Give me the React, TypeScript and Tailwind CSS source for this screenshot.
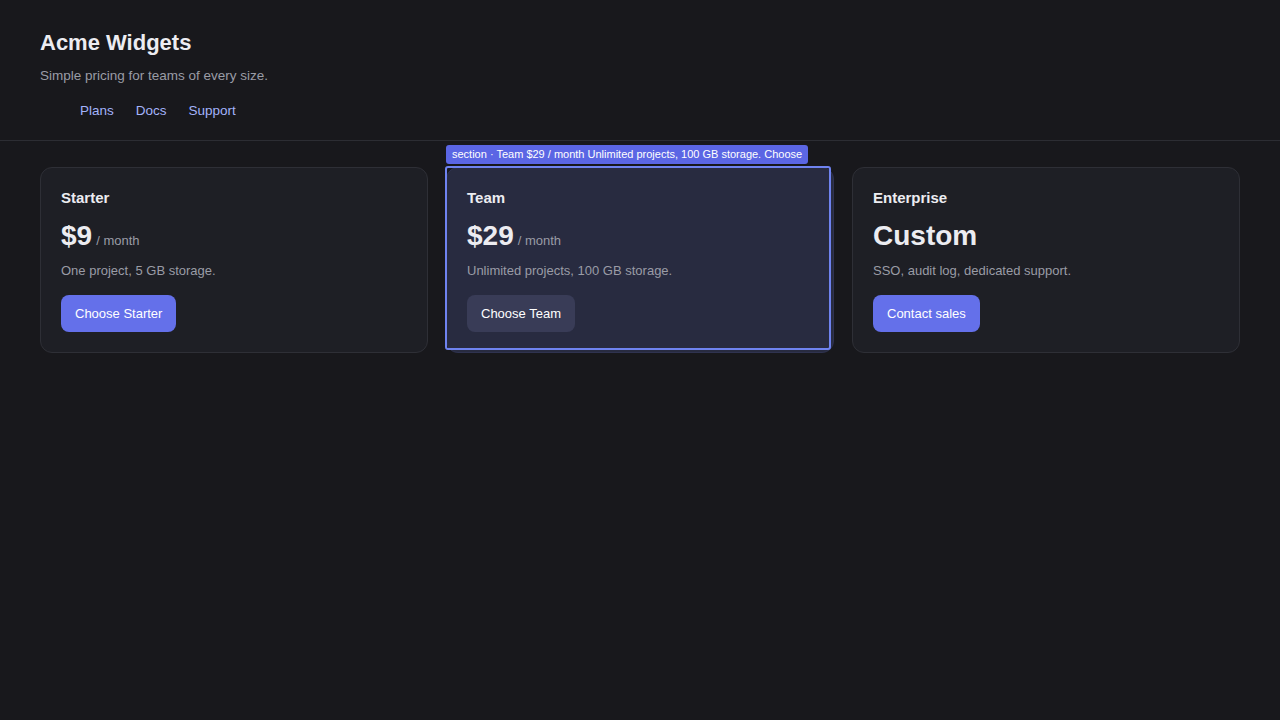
import React from 'react';

interface Plan {
  name: string;
  price: string;
  unit?: string;
  blurb: string;
  cta: string;
  featured?: boolean;
}

const plans: Plan[] = [
  { name: 'Starter', price: '$9', unit: '/ month', blurb: 'One project, 5 GB storage.', cta: 'Choose Starter' },
  {
    name: 'Team',
    price: '$29',
    unit: '/ month',
    blurb: 'Unlimited projects, 100 GB storage.',
    cta: 'Choose Team',
    featured: true,
  },
  { name: 'Enterprise', price: 'Custom', blurb: 'SSO, audit log, dedicated support.', cta: 'Contact sales' },
];

const PlanCard: React.FC<{ plan: Plan }> = ({ plan }) => (
  <section
    className={`relative rounded-xl border p-5 ${
      plan.featured ? 'border-[#2f3350] bg-[#282b40]' : 'border-[#2e2f36] bg-[#1e1f25]'
    }`}
  >
    {plan.featured && (
      <>
        <div className="pointer-events-none absolute left-[-2px] top-[-2px] h-full w-full rounded-[3px] border-2 border-[#6f83f0]" />
        <div className="absolute left-[-1px] top-[-23px] whitespace-nowrap rounded-[3px] bg-[#5b66e4] px-[6px] py-[3px] text-[11px] leading-[13px] text-white">
          section · Team $29 / month Unlimited projects, 100 GB storage. Choose
        </div>
      </>
    )}
    <h3 className="text-[15px] font-bold leading-[20px] text-[#ececf1]">{plan.name}</h3>
    <div className="mt-[11px] flex items-baseline gap-[4px]">
      <span className="text-[28px] font-bold leading-[34px] text-[#ececf1]">{plan.price}</span>
      {plan.unit && <span className="text-[13px] text-[#9a9ca6]">{plan.unit}</span>}
    </div>
    <p className="mt-[8px] text-[13px] leading-[20px] text-[#9a9ca6]">{plan.blurb}</p>
    <button
      className={`mt-[14px] rounded-lg px-[14px] py-[9px] text-[13px] leading-[19px] text-white ${
        plan.featured ? 'bg-[#393c57] text-[#e4e5ee]' : 'bg-[#6470ea]'
      }`}
    >
      {plan.cta}
    </button>
  </section>
);

export default function App() {
  return (
    <div className="min-h-screen bg-[#18181c] font-['Liberation_Sans',Arial,sans-serif] text-[#ececf1]">
      <header className="border-b border-[#2c2d33] px-10 pb-[19px] pt-[29px]">
        <h1 className="text-[22px] font-bold leading-[28px]">Acme Widgets</h1>
        <p className="mt-[9px] text-[13.5px] leading-[20px] text-[#9a9ca6]">Simple pricing for teams of every size.</p>
        <nav className="mt-[15px] pl-10">
          <ul className="flex gap-[22px] text-[13.5px] leading-[20px] text-[#a3b3fb]">
            <li>Plans</li>
            <li>Docs</li>
            <li>Support</li>
          </ul>
        </nav>
      </header>
      <main className="grid grid-cols-3 gap-[18px] px-10 pt-[26px]">
        {plans.map((plan) => (
          <PlanCard key={plan.name} plan={plan} />
        ))}
      </main>
    </div>
  );
}
